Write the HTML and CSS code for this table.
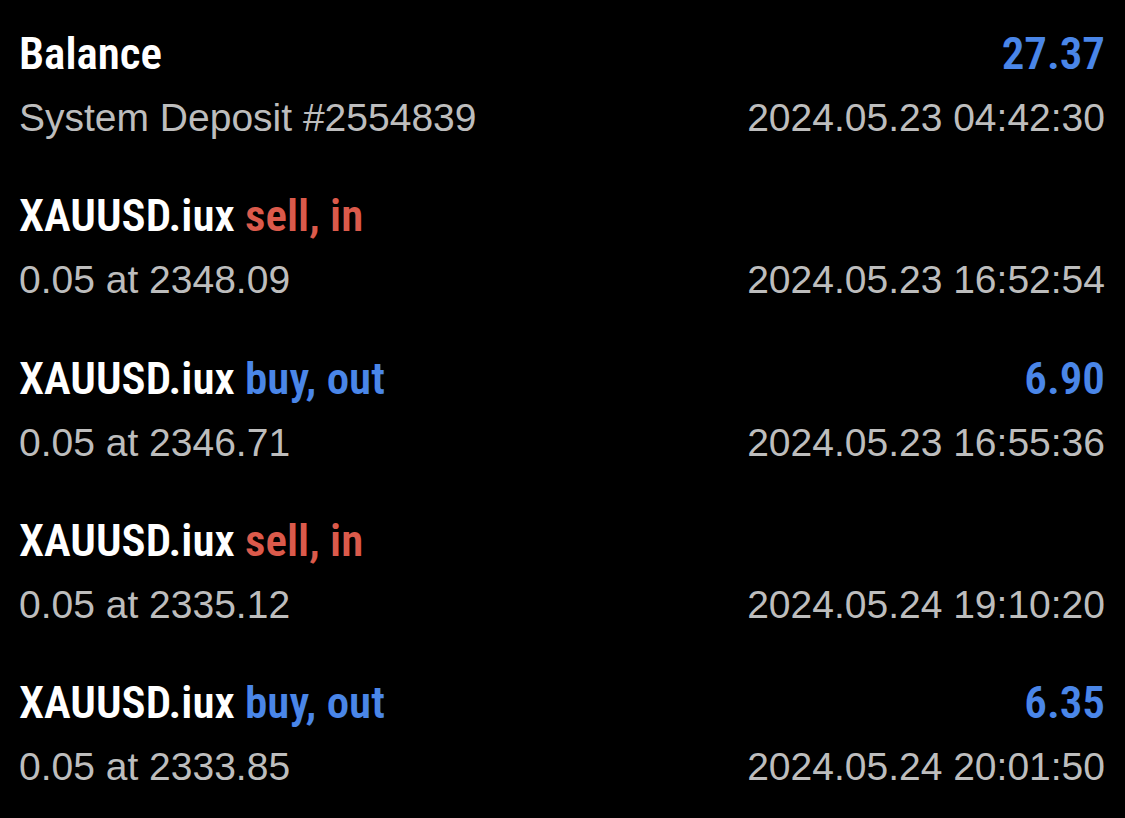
FILE: index.html
```html
<!DOCTYPE html>
<html>
<head>
<meta charset="utf-8">
<link rel="stylesheet" href="styles.css">
</head>
<body>
<div class="list">
  <div class="row">
    <div class="top"><span class="title">Balance</span><span class="amount">27.37</span></div>
    <div class="sub"><span>System Deposit #2554839</span><span>2024.05.23 04:42:30</span></div>
  </div>
  <div class="row">
    <div class="top"><span class="title">XAUUSD.iux <span class="sell">sell, in</span></span></div>
    <div class="sub"><span>0.05 at 2348.09</span><span>2024.05.23 16:52:54</span></div>
  </div>
  <div class="row">
    <div class="top"><span class="title">XAUUSD.iux <span class="buy">buy, out</span></span><span class="amount">6.90</span></div>
    <div class="sub"><span>0.05 at 2346.71</span><span>2024.05.23 16:55:36</span></div>
  </div>
  <div class="row">
    <div class="top"><span class="title">XAUUSD.iux <span class="sell">sell, in</span></span></div>
    <div class="sub"><span>0.05 at 2335.12</span><span>2024.05.24 19:10:20</span></div>
  </div>
  <div class="row">
    <div class="top"><span class="title">XAUUSD.iux <span class="buy">buy, out</span></span><span class="amount">6.35</span></div>
    <div class="sub"><span>0.05 at 2333.85</span><span>2024.05.24 20:01:50</span></div>
  </div>
</div>
</body>
</html>
```
FILE: styles.css
```css
html, body {
  margin: 0;
  padding: 0;
  background: #000;
}
.list {
  display: flex;
  flex-direction: column;
  gap: 47.3px;
  padding: 28px 20px 0 19px;
}
.row {
  display: flex;
  flex-direction: column;
  gap: 13px;
}
.top, .sub {
  display: flex;
  justify-content: space-between;
  align-items: baseline;
}
.top {
  font-family: "Roboto", "Open Sans", sans-serif;
  font-stretch: 75%;
  font-weight: 600;
  font-size: 45px;
  line-height: 52px;
  color: #fff;
}
.amount, .buy { color: #4a86e8; }
.sell { color: #db5a4b; }
.sub {
  font-family: "Liberation Sans", Arial, sans-serif;
  font-size: 39px;
  line-height: 50px;
  color: #bdbdbd;
}
```
